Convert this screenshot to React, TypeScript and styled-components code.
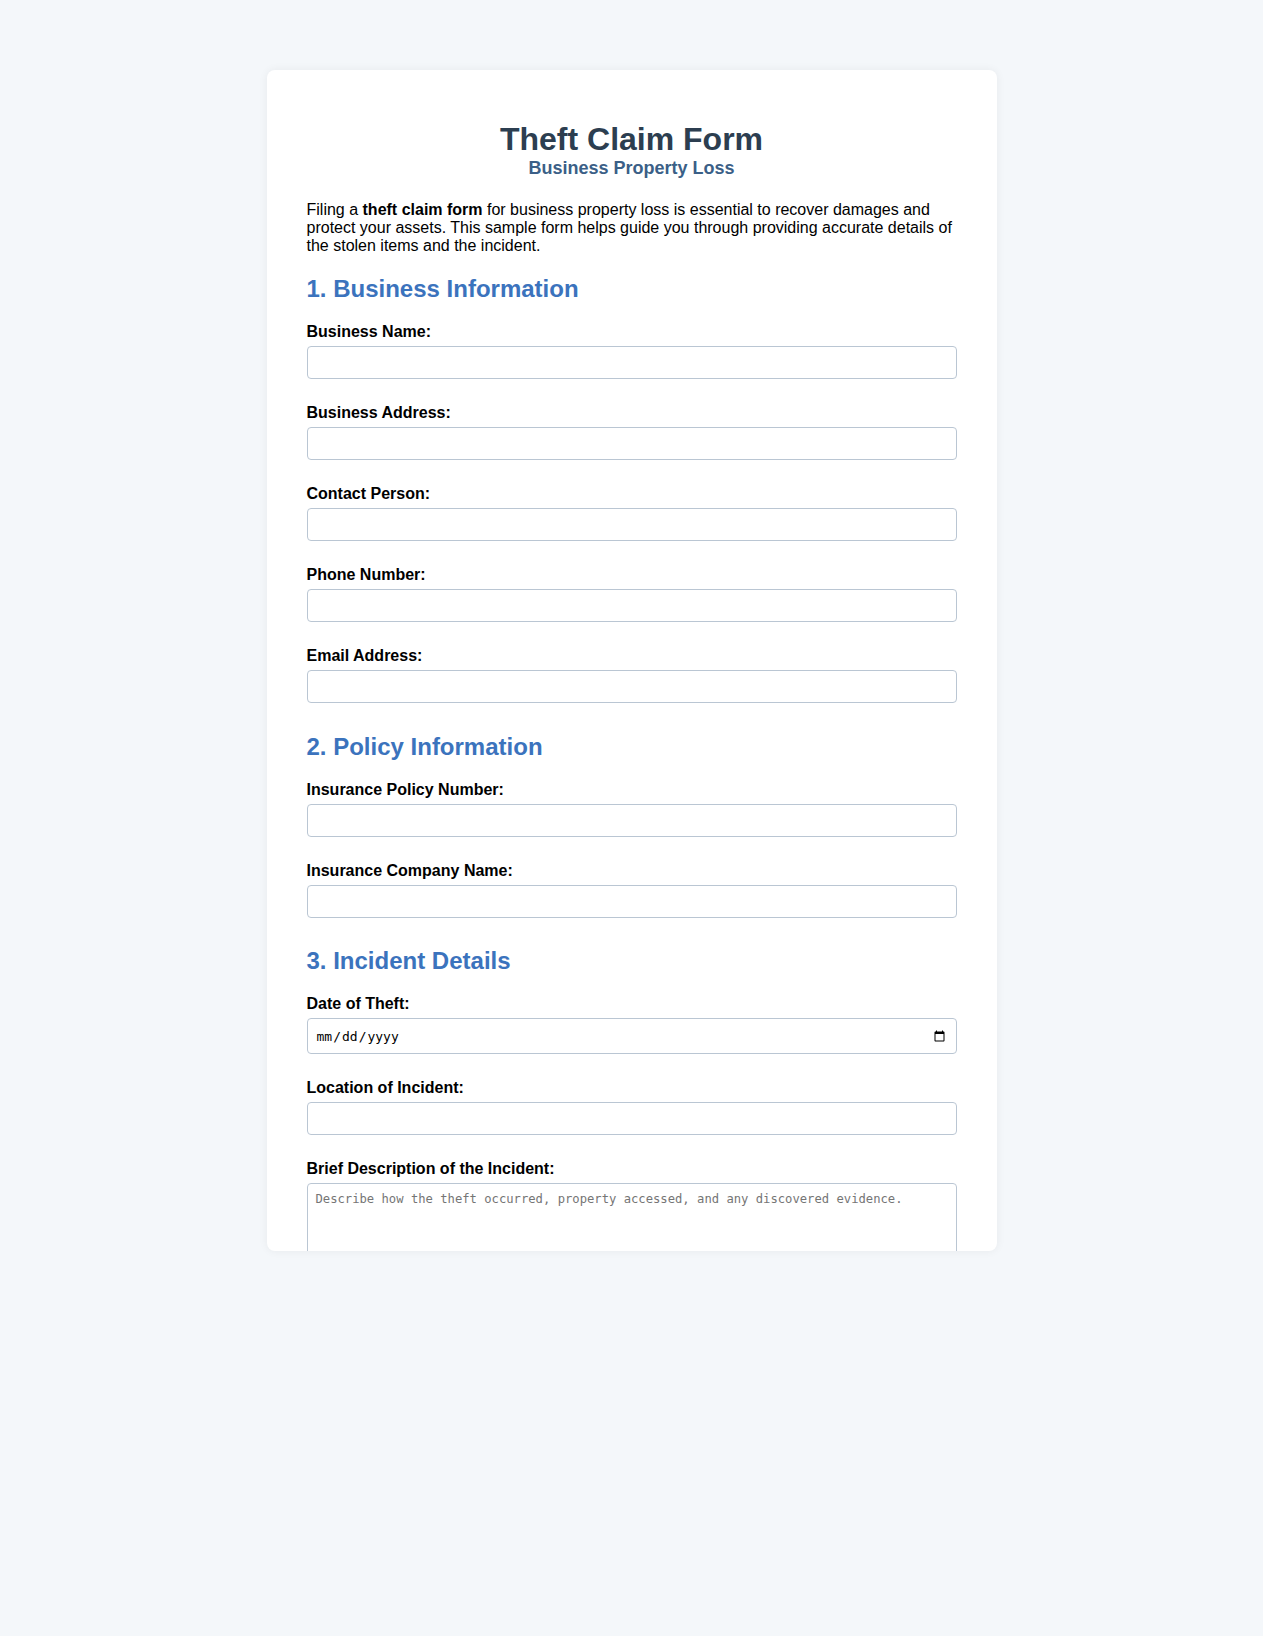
import React from "react";
import styled, { createGlobalStyle } from "styled-components";

const GlobalStyle = createGlobalStyle`
  html, body {
    margin: 0;
    padding: 0;
    background: #f4f7fa;
    font-family: "Liberation Sans", Arial, sans-serif;
    color: #000;
  }
  * { box-sizing: border-box; }
`;

const Page = styled.div`
  min-height: 1636px;
  padding-top: 70px;
`;

const Card = styled.main`
  width: 730px;
  height: 1181px;
  margin: 0 auto;
  padding: 51px 40px 0;
  background: #ffffff;
  border-radius: 8px;
  box-shadow: 0 0 10px rgba(0, 0, 0, 0.06);
  overflow: hidden;
`;

const Header = styled.header`
  text-align: center;
  margin-bottom: 22px;
`;

const Title = styled.h1`
  margin: 0;
  font-size: 32px;
  font-weight: bold;
  color: #2c3e50;
`;

const Subtitle = styled.div`
  font-size: 18px;
  font-weight: bold;
  color: #3b5f87;
`;

const Intro = styled.p`
  margin: 0 0 20px;
  font-size: 16px;
  line-height: normal;
`;

const Sections = styled.div`
  display: flex;
  flex-direction: column;
  gap: 29.6px;
`;

const Section = styled.section`
  display: flex;
  flex-direction: column;
  gap: 25px;
`;

const SectionTitle = styled.h2`
  margin: 0 0 -5px;
  font-size: 24px;
  font-weight: bold;
  color: #3b73bd;
`;

const Field = styled.div`
  display: flex;
  flex-direction: column;
`;

const Label = styled.label`
  display: block;
  font-size: 16px;
  font-weight: bold;
  margin-bottom: 5px;
`;

const TextInput = styled.input<{ $tall?: boolean }>`
  width: 100%;
  height: ${(p) => (p.$tall ? "36px" : "33px")};
  padding: 0 8px;
  border: 1px solid #bac6d3;
  border-radius: 4px;
  background: #fff;
  font-family: "DejaVu Sans Mono", monospace;
  font-size: 13px;
  color: #000;
  outline: none;
`;

const TextArea = styled.textarea`
  width: 100%;
  height: 120px;
  padding: 8px;
  border: 1px solid #bac6d3;
  border-radius: 4px;
  font-family: "DejaVu Sans Mono", monospace;
  font-size: 12.2px;
  resize: vertical;
  outline: none;
  &::placeholder {
    color: #757575;
  }
`;

type FieldDef = { label: string; type?: string };

const sections: { title: string; fields: FieldDef[] }[] = [
  {
    title: "1. Business Information",
    fields: [
      { label: "Business Name:" },
      { label: "Business Address:" },
      { label: "Contact Person:" },
      { label: "Phone Number:", type: "tel" },
      { label: "Email Address:", type: "email" },
    ],
  },
  {
    title: "2. Policy Information",
    fields: [
      { label: "Insurance Policy Number:" },
      { label: "Insurance Company Name:" },
    ],
  },
];

export default function App() {
  return (
    <>
      <GlobalStyle />
      <Page>
        <Card>
          <Header>
            <Title>Theft Claim Form</Title>
            <Subtitle>Business Property Loss</Subtitle>
          </Header>
          <Intro>
            Filing a <strong>theft claim form</strong> for business property loss is essential to
            recover damages and protect your assets. This sample form helps guide you through
            providing accurate details of the stolen items and the incident.
          </Intro>
          <Sections>
            {sections.map((s) => (
              <Section key={s.title}>
                <SectionTitle>{s.title}</SectionTitle>
                {s.fields.map((f) => (
                  <Field key={f.label}>
                    <Label>{f.label}</Label>
                    <TextInput type={f.type ?? "text"} />
                  </Field>
                ))}
              </Section>
            ))}
            <Section>
              <SectionTitle>3. Incident Details</SectionTitle>
              <Field>
                <Label>Date of Theft:</Label>
                <TextInput type="date" $tall />
              </Field>
              <Field>
                <Label>Location of Incident:</Label>
                <TextInput type="text" />
              </Field>
              <Field>
                <Label>Brief Description of the Incident:</Label>
                <TextArea placeholder="Describe how the theft occurred, property accessed, and any discovered evidence." />
              </Field>
            </Section>
          </Sections>
        </Card>
      </Page>
    </>
  );
}
